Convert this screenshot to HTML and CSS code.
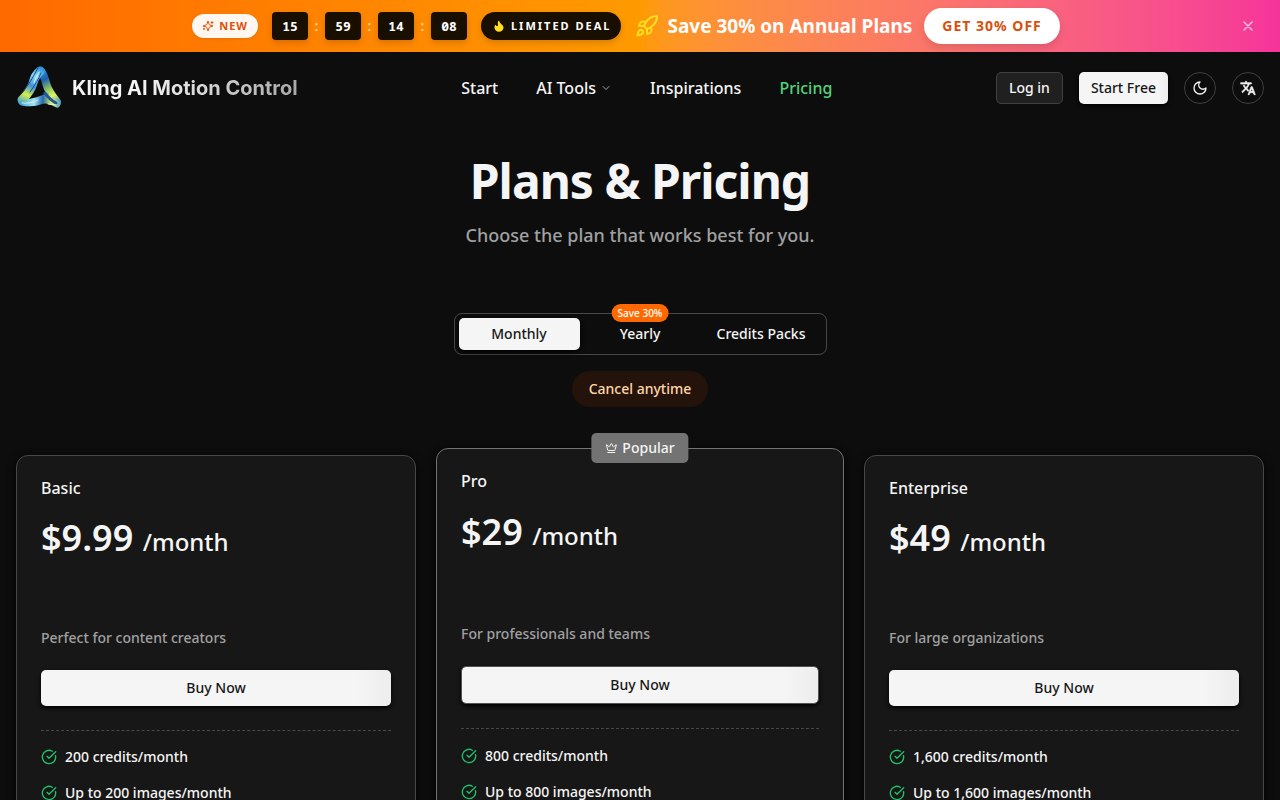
FILE: index.html
```html
<!DOCTYPE html>
<html lang="en">
<head>
    <meta charset="UTF-8">
    <meta name="viewport" content="width=device-width, initial-scale=1.0">
    <title>Pricing - Kling AI Motion Control</title>
    <link rel="stylesheet" href="styles.css">
</head>
<body>

<svg class="sprite" width="0" height="0" aria-hidden="true">
    <symbol id="icon-check" viewBox="0 0 24 24">
        <path d="M21.801 10A10 10 0 1 1 17 3.335"/>
        <path d="m9 11 3 3L22 4"/>
    </symbol>
</svg>

<div class="promo">
    <span class="promo-new">
        <svg class="icon" width="12" height="12" viewBox="0 0 24 24"><path d="M9.937 15.5A2 2 0 0 0 8.5 14.063l-6.135-1.582a.5.5 0 0 1 0-.962L8.5 9.936A2 2 0 0 0 9.937 8.5l1.582-6.135a.5.5 0 0 1 .963 0L14.063 8.5A2 2 0 0 0 15.5 9.937l6.135 1.581a.5.5 0 0 1 0 .964L15.5 14.063a2 2 0 0 0-1.437 1.437l-1.582 6.135a.5.5 0 0 1-.963 0z"/><path d="M20 3v4M22 5h-4M4 17v2M5 18H3"/></svg>
        NEW
    </span>
    <div class="timer">
        <span class="timer-box">15</span><span class="timer-sep">:</span>
        <span class="timer-box">59</span><span class="timer-sep">:</span>
        <span class="timer-box">14</span><span class="timer-sep">:</span>
        <span class="timer-box">08</span>
    </div>
    <span class="promo-deal">
        <svg width="12" height="12" viewBox="0 0 24 24"><path fill="#ffdf20" d="M12 1c1 4 3 5.500 5 7.500S21 12.500 21 15a9 8.500 0 0 1-18 0c0-2.500 1-4.500 2.500-5.500C6 11.500 7.500 12.500 9 12c2-1 .5-4 .5-6 0-2 1-4 2.500-5z"/></svg>
        LIMITED DEAL
    </span>
    <div class="promo-offer">
        <svg class="icon rocket" width="24" height="24" viewBox="0 0 24 24"><path d="M4.500 16.500c-1.500 1.260-2 5-2 5s3.740-.5 5-2c.71-.84.7-2.130-.09-2.910a2.180 2.180 0 0 0-2.910-.09z"/><path d="m12 15-3-3a22 22 0 0 1 2-3.950A12.880 12.880 0 0 1 22 2c0 2.720-.78 7.500-6 11a22.350 22.350 0 0 1-4 2z"/><path d="M9 12H4s.55-3.030 2-4c1.620-1.080 5 0 5 0"/><path d="M12 15v5s3.030-.55 4-2c1.080-1.620 0-5 0-5"/></svg>
        <span class="promo-text">Save 30% on Annual Plans</span>
    </div>
    <button type="button" class="promo-btn">GET 30% OFF</button>
    <button type="button" class="promo-close" aria-label="Close">
        <svg class="icon" width="16" height="16" viewBox="0 0 24 24"><path d="M18 6 6 18M6 6l12 12"/></svg>
    </button>
</div>

<header class="header">
    <a href="#" class="brand">
        <svg width="48" height="48" viewBox="0 0 48 48" fill="none" stroke-linecap="round">
            <defs>
                <linearGradient id="band-left" gradientUnits="userSpaceOnUse" x1="24" y1="3" x2="6" y2="40">
                    <stop offset="0" stop-color="#2a8fe0"/>
                    <stop offset="0.250" stop-color="#8fdcf5"/>
                    <stop offset="0.500" stop-color="#3f93dc"/>
                    <stop offset="0.750" stop-color="#d5ee4a"/>
                    <stop offset="1" stop-color="#3fa0dd"/>
                </linearGradient>
                <linearGradient id="band-right" gradientUnits="userSpaceOnUse" x1="24" y1="4" x2="43" y2="40">
                    <stop offset="0" stop-color="#3aa5ea"/>
                    <stop offset="0.300" stop-color="#1c5fae"/>
                    <stop offset="0.600" stop-color="#a5d65a"/>
                    <stop offset="0.750" stop-color="#e3f065"/>
                    <stop offset="1" stop-color="#2c86d8"/>
                </linearGradient>
                <linearGradient id="band-bottom" gradientUnits="userSpaceOnUse" x1="3" y1="38" x2="46" y2="40">
                    <stop offset="0" stop-color="#3ba0e4"/>
                    <stop offset="0.350" stop-color="#a5e5ee"/>
                    <stop offset="0.550" stop-color="#2469b5"/>
                    <stop offset="0.750" stop-color="#dff04f"/>
                    <stop offset="1" stop-color="#3c9ae5"/>
                </linearGradient>
            </defs>
            <path stroke="url(#band-right)" stroke-width="8" d="M25 7q3 4 5 12t11 19"/>
            <path stroke="url(#band-bottom)" stroke-width="7" d="M6 38q11 2 18-1t17 3"/>
            <path stroke="url(#band-bottom)" stroke-width="4" d="M9 37q11 0 22-6"/>
            <path stroke="#1b56a0" stroke-width="3" d="M29 29q4 6 11 10"/>
            <path stroke="url(#band-left)" stroke-width="9" d="M24 7q-5 4-7 12T6 36"/>
            <path stroke="#17498f" stroke-width="1" d="M22 4q-6 12-15 24M25 9q-3 8-11 19"/>
            <path stroke="#d8f4f5" stroke-width="1" d="M23 8q-3 5-5 11M6 39q9 1 16-3M32 40l8 1"/>
        </svg>
        <span class="brand-name">Kling AI Motion Control</span>
    </a>
    <nav class="nav">
        <a href="#">Start</a>
        <a href="#">AI Tools
            <svg class="icon chevron" width="12" height="12" viewBox="0 0 24 24"><path d="m6 9 6 6 6-6"/></svg>
        </a>
        <a href="#">Inspirations</a>
        <a href="#" class="active">Pricing</a>
    </nav>
    <div class="actions">
        <button type="button" class="btn btn-outline">Log in</button>
        <button type="button" class="btn btn-light">Start Free</button>
        <button type="button" class="btn-round" aria-label="Toggle theme">
            <svg class="icon" width="16" height="16" viewBox="0 0 24 24"><path d="M12 3a6 6 0 0 0 9 9 9 9 0 1 1-9-9Z"/></svg>
        </button>
        <button type="button" class="btn-round" aria-label="Change language">
            <svg width="16" height="16" viewBox="0 0 24 24"><path fill="currentColor" stroke="currentColor" d="m12.870 15.070-2.540-2.510.03-.03A17.520 17.520 0 0 0 14.070 6H17V4h-7V2H8v2H1v2h11.170A15.700 15.700 0 0 1 9 11.350 15.700 15.700 0 0 1 6.690 8h-2a17.600 17.600 0 0 0 2.980 4.560l-5.090 5.020L4 19l5-5 3.110 3.110zM18.500 10h-2L12 22h2l1.120-3h4.750L21 22h2zm-2.620 7 1.620-4.330L19.120 17z"/></svg>
        </button>
    </div>
</header>

<main class="container">
    <h1>Plans &amp; Pricing</h1>
    <p class="subtitle">Choose the plan that works best for you.</p>

    <div class="tabs">
        <button type="button" class="tab selected">Monthly</button>
        <button type="button" class="tab">Yearly<span class="save-badge">Save 30%</span></button>
        <button type="button" class="tab">Credits Packs</button>
    </div>
    <p class="cancel-note">Cancel anytime</p>

    <div class="plans">
        <section class="plan">
            <h2>Basic</h2>
            <p class="price">$9.99 <span>/month</span></p>
            <p class="description">Perfect for content creators</p>
            <button type="button" class="btn btn-light buy">Buy Now</button>
            <ul>
                <li><svg class="icon"><use href="#icon-check"/></svg>200 credits/month</li>
                <li><svg class="icon"><use href="#icon-check"/></svg>Up to 200 images/month</li>
            </ul>
        </section>
        <section class="plan plan-popular">
            <span class="popular-badge">
                <svg class="icon" width="12" height="12" viewBox="0 0 24 24"><path d="M11.562 3.266a.5.5 0 0 1 .876 0L15.390 8.870a1 1 0 0 0 1.516.294L21.183 5.500a.5.5 0 0 1 .798.519l-2.834 10.246a1 1 0 0 1-.956.734H5.810a1 1 0 0 1-.957-.734L2.020 6.020a.5.5 0 0 1 .798-.519l4.276 3.664a1 1 0 0 0 1.516-.294z"/><path d="M5 21h14"/></svg>
                Popular
            </span>
            <h2>Pro</h2>
            <p class="price">$29 <span>/month</span></p>
            <p class="description">For professionals and teams</p>
            <button type="button" class="btn btn-light buy">Buy Now</button>
            <ul>
                <li><svg class="icon"><use href="#icon-check"/></svg>800 credits/month</li>
                <li><svg class="icon"><use href="#icon-check"/></svg>Up to 800 images/month</li>
            </ul>
        </section>
        <section class="plan">
            <h2>Enterprise</h2>
            <p class="price">$49 <span>/month</span></p>
            <p class="description">For large organizations</p>
            <button type="button" class="btn btn-light buy">Buy Now</button>
            <ul>
                <li><svg class="icon"><use href="#icon-check"/></svg>1,600 credits/month</li>
                <li><svg class="icon"><use href="#icon-check"/></svg>Up to 1,600 images/month</li>
            </ul>
        </section>
    </div>
</main>

</body>
</html>
```
FILE: styles.css
```css
* {
    box-sizing: border-box;
}
body {
    margin: 0;
    background-color: #0d0d0d;
    color: #f5f5f5;
    font-family: "Noto Sans", sans-serif;
    font-size: 14px;
    font-weight: 500;
    line-height: 20px;
}
h1, h2, p, ul {
    margin: 0;
    padding: 0;
}
a {
    color: inherit;
    text-decoration: none;
}
button {
    font: inherit;
    color: inherit;
    padding: 0;
    border: none;
    background: none;
    cursor: pointer;
}
.sprite {
    position: absolute;
}
.icon {
    fill: none;
    stroke: currentColor;
    stroke-width: 2;
    stroke-linecap: round;
    stroke-linejoin: round;
}

/* promo banner */
.promo {
    position: relative;
    display: flex;
    align-items: center;
    justify-content: center;
    gap: 14px;
    height: 52px;
    padding: 0 44px 0 16px;
    background: linear-gradient(90deg in oklab, #ff6900, #fe9a00, #f6339a);
}
.promo-new, .promo-deal {
    display: flex;
    align-items: center;
    font-size: 11px;
    font-weight: 700;
    border-radius: 14px;
    white-space: nowrap;
}
.promo-new {
    gap: 5px;
    height: 24px;
    padding: 0 10px;
    background-color: #fff7f0;
    color: #e0500a;
    letter-spacing: 1px;
    box-shadow: 0 1px 3px rgba(0, 0, 0, 0.1);
}
.timer {
    display: flex;
    align-items: center;
    gap: 4px;
}
.timer-box {
    width: 36px;
    height: 28px;
    line-height: 28px;
    border-radius: 4px;
    background-color: #190f00;
    color: #fff;
    font-family: "Noto Sans Mono", "DejaVu Sans Mono", monospace;
    font-size: 13px;
    font-weight: 700;
    text-align: center;
    box-shadow: 0 3px 6px rgba(0, 0, 0, 0.15);
}
.timer-sep {
    width: 9px;
    text-align: center;
    color: #ffe0b0;
}
.promo-deal {
    gap: 6px;
    height: 28px;
    padding: 0 10px 0 12px;
    background-color: #190f00;
    color: #fff;
    letter-spacing: 2px;
    box-shadow: 0 3px 6px rgba(0, 0, 0, 0.15);
}
.promo-offer {
    display: flex;
    align-items: center;
    gap: 8px;
}
.rocket {
    color: #ffdf20;
}
.promo-text {
    font-size: 19px;
    font-weight: 700;
    line-height: 28px;
    color: #fff;
    white-space: nowrap;
}
.promo-btn {
    height: 36px;
    padding: 0 18px;
    margin-left: -2px;
    border-radius: 18px;
    background-color: #fff;
    color: #d9500b;
    font-weight: 700;
    letter-spacing: 1px;
    white-space: nowrap;
    box-shadow: 0 4px 8px rgba(0, 0, 0, 0.12);
}
.promo-close {
    position: absolute;
    top: 14px;
    right: 20px;
    display: flex;
    align-items: center;
    justify-content: center;
    width: 24px;
    height: 24px;
    color: #fdc5e3;
}

/* header */
.header {
    display: flex;
    align-items: center;
    justify-content: space-between;
    height: 72px;
    padding: 0 16px;
}
.brand {
    display: flex;
    align-items: center;
    gap: 8px;
}
.brand-name {
    font-family: Inter, sans-serif;
    font-size: 20px;
    font-weight: 700;
    line-height: 28px;
    background: linear-gradient(90deg, #f5f5f5 30%, #a8a8a8);
    background-clip: text;
    -webkit-background-clip: text;
    color: transparent;
}
.nav {
    display: flex;
    gap: 38px;
    font-size: 16px;
    line-height: 24px;
}
.nav a {
    display: flex;
    align-items: center;
    gap: 4px;
}
.nav .active {
    color: #4fd37d;
}
.chevron {
    color: #a1a1a1;
}
.actions {
    display: flex;
    gap: 16px;
}
.btn {
    height: 32px;
    padding: 0 12px;
    border-radius: 5px;
}
.btn-outline {
    border: 1px solid #404040;
    background-color: #202020;
}
.btn-light {
    background: linear-gradient(90deg, #f5f5f5 90%, #ededed);
    color: #171717;
    box-shadow: 0 2px 4px #000000;
}
.btn-round {
    display: flex;
    align-items: center;
    justify-content: center;
    width: 32px;
    height: 32px;
    border: 1px solid #404040;
    border-radius: 50%;
}

/* pricing */
.container {
    display: flex;
    flex-direction: column;
    align-items: center;
    padding: 33px 16px 64px;
}
h1 {
    font-size: 48px;
    font-weight: 700;
    line-height: 48px;
    letter-spacing: -1px;
}
.subtitle {
    margin-top: 16px;
    font-size: 18px;
    line-height: 28px;
    color: #a1a1a1;
}
.tabs {
    display: grid;
    grid-template-columns: repeat(3, 121px);
    margin-top: 64px;
    padding: 4px;
    border: 1px solid #484848;
    border-radius: 8px;
}
.tab {
    position: relative;
    height: 32px;
    border-radius: 5px;
}
.tab.selected {
    background-color: #f5f5f5;
    color: #171717;
    box-shadow: 0 2px 5px #000000;
}
.save-badge {
    position: absolute;
    top: -14px;
    left: 50%;
    transform: translateX(-50%);
    padding: 0 6px;
    border-radius: 9px;
    background-color: #ff6900;
    color: #fff;
    font-size: 10px;
    line-height: 18px;
    white-space: nowrap;
}
.cancel-note {
    margin-top: 16px;
    padding: 8px 17px;
    border-radius: 18px;
    background-color: #24130b;
    color: #ffd6a7;
}
.plans {
    display: grid;
    grid-template-columns: repeat(3, 1fr);
    gap: 24px;
    width: 100%;
    margin-top: 48px;
}
.plan {
    position: relative;
    padding: 24px;
    border: 1px solid #484848;
    border-radius: 12px;
    background-color: #171717;
    box-shadow: 0 2px 8px #000000;
}
.plan h2 {
    font-size: 16px;
    font-weight: 500;
    line-height: 16px;
}
.price {
    height: 110px;
    margin-top: 22px;
    font-size: 36px;
    font-weight: 600;
    line-height: 40px;
}
.price span {
    font-size: 24px;
    font-weight: 500;
}
.description {
    color: #a1a1a1;
}
.buy {
    display: block;
    width: 100%;
    height: 36px;
    margin: 22px 0 24px;
}
.plan ul {
    display: flex;
    flex-direction: column;
    gap: 16px;
    padding-top: 16px;
    border-top: 1px dashed #484848;
    list-style: none;
}
.plan li {
    display: flex;
    align-items: center;
    gap: 8px;
}
.plan li .icon {
    width: 16px;
    height: 16px;
    color: #1fc16b;
}
.plan-popular {
    margin: -7px -4px;
    border-color: #737373;
}
.plan-popular .price {
    height: 112px;
    margin-top: 23px;
}
.plan-popular .buy {
    height: 38px;
    border: 1px solid #525252;
    background-clip: padding-box;
}
.plan-popular ul {
    padding-top: 17px;
}
.popular-badge {
    position: absolute;
    top: -16px;
    left: 50%;
    transform: translateX(-50%);
    display: flex;
    align-items: center;
    gap: 5px;
    height: 30px;
    padding: 0 14px;
    border-radius: 5px;
    background-color: #737373;
}
```
